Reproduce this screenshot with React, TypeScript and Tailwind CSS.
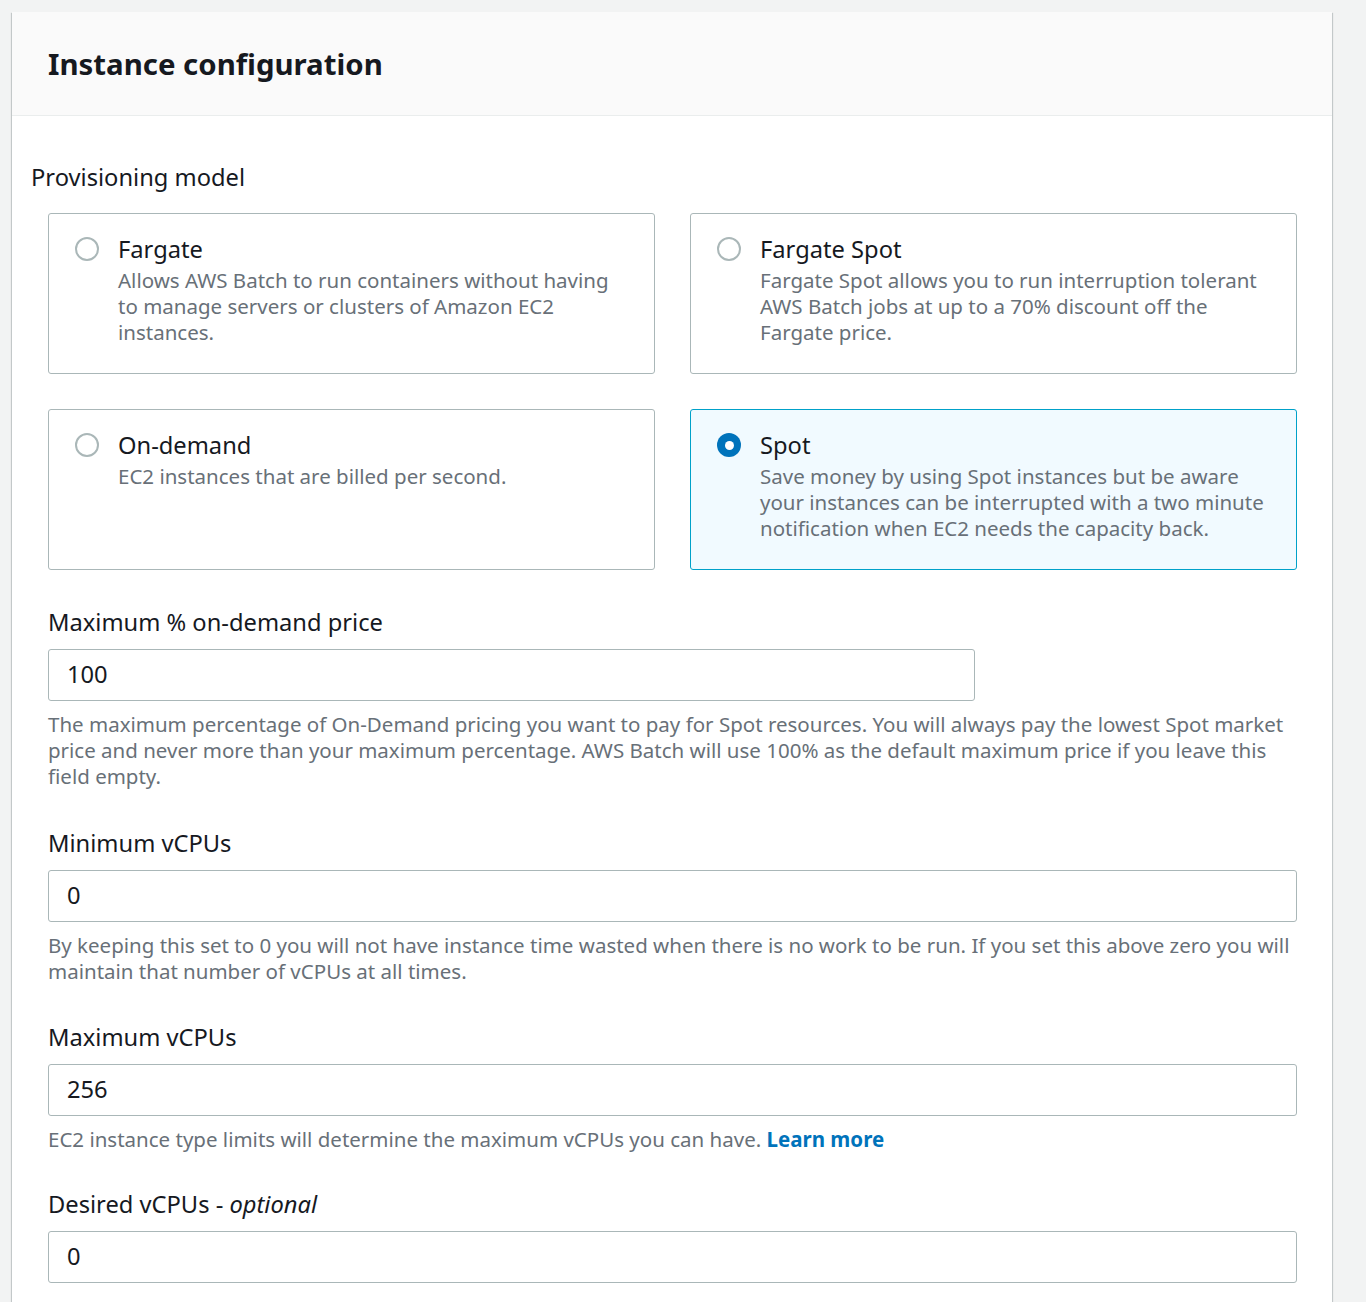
import React from "react";

type Tile = {
  title: string;
  lines: string[];
  selected?: boolean;
};

const tiles: Tile[] = [
  {
    title: "Fargate",
    lines: [
      "Allows AWS Batch to run containers without having",
      "to manage servers or clusters of Amazon EC2",
      "instances.",
    ],
  },
  {
    title: "Fargate Spot",
    lines: [
      "Fargate Spot allows you to run interruption tolerant",
      "AWS Batch jobs at up to a 70% discount off the",
      "Fargate price.",
    ],
  },
  {
    title: "On-demand",
    lines: ["EC2 instances that are billed per second."],
  },
  {
    title: "Spot",
    lines: [
      "Save money by using Spot instances but be aware",
      "your instances can be interrupted with a two minute",
      "notification when EC2 needs the capacity back.",
    ],
    selected: true,
  },
];

function Radio({ selected }: { selected?: boolean }) {
  return selected ? (
    <span className="mt-[3px] box-border flex h-[24px] w-[24px] shrink-0 items-center justify-center rounded-full bg-[#0073bb]">
      <span className="h-[9px] w-[9px] rounded-full bg-white" />
    </span>
  ) : (
    <span className="mt-[3px] box-border h-[24px] w-[24px] shrink-0 rounded-full border-2 border-[#aab7b8] bg-white" />
  );
}

function TileCard({ t }: { t: Tile }) {
  return (
    <div
      className={
        t.selected
          ? "box-border flex h-[161px] gap-[19px] rounded-[3px] border border-[#00a1c9] bg-[#f1faff] pl-[26px] pr-[20px] pt-[20px]"
          : "box-border flex h-[161px] gap-[19px] rounded-[3px] border border-[#aab7b8] bg-white pl-[26px] pr-[20px] pt-[20px]"
      }
    >
      <Radio selected={t.selected} />
      <div className="flex flex-col">
        <div className="text-[23.7px] leading-[30px] text-[#16191f]">{t.title}</div>
        <div className="mt-[3px] whitespace-nowrap text-[20.5px] leading-[26px] text-[#687078]">
          {t.lines.map((l, i) => (
            <div key={i}>{l}</div>
          ))}
        </div>
      </div>
    </div>
  );
}

function Field({
  label,
  value,
  narrow,
  children,
}: {
  label: React.ReactNode;
  value: string;
  narrow?: boolean;
  children?: React.ReactNode;
}) {
  return (
    <div className="flex flex-col">
      <div className="text-[23.7px] leading-[30px] text-[#16191f]">{label}</div>
      <div
        className={
          narrow
            ? "mt-[12px] box-border flex h-[52px] w-[927px] items-center rounded-[3px] border border-[#aab7b8] bg-white pl-[18px] text-[23.7px] text-[#16191f]"
            : "mt-[12px] box-border flex h-[52px] w-full items-center rounded-[3px] border border-[#aab7b8] bg-white pl-[18px] text-[23.7px] text-[#16191f]"
        }
      >
        {value}
      </div>
      {children ? (
        <div className="mt-[10px] whitespace-nowrap text-[20.5px] leading-[26px] text-[#687078]">{children}</div>
      ) : null}
    </div>
  );
}

export default function App() {
  return (
    <div className="min-h-[1302px] overflow-hidden bg-[#f2f3f3] pl-[12px] pt-[12px] font-['Noto_Sans',_'Open_Sans',_sans-serif]">
      <div className="w-[1320px] bg-white shadow-[0_1px_1px_0_rgba(0,28,36,0.3),1px_1px_1px_0_rgba(0,28,36,0.15),-1px_1px_1px_0_rgba(0,28,36,0.15)]">
        <div className="box-border flex h-[104px] items-center border-b border-[#eaeded] bg-[#fafafa] pl-[36px]">
          <h2 className="text-[29.4px] font-bold leading-[36px] text-[#16191f]">Instance configuration</h2>
        </div>
        <div className="flex flex-col pb-[60px] pl-[36px] pr-[35px] pt-[46px]">
          <div className="-ml-[17px] text-[23.7px] leading-[30px] text-[#16191f]">Provisioning model</div>
          <div className="mt-[21px] grid grid-cols-2 gap-x-[35px] gap-y-[35px]">
            {tiles.map((t) => (
              <TileCard key={t.title} t={t} />
            ))}
          </div>
          <div className="mt-[37px] flex flex-col">
            <Field label="Maximum % on-demand price" value="100" narrow>
              <div>
                The maximum percentage of On-Demand pricing you want to pay for Spot resources. You will always pay the lowest Spot market
              </div>
              <div>
                price and never more than your maximum percentage. AWS Batch will use 100% as the default maximum price if you leave this
              </div>
              <div>field empty.</div>
            </Field>
            <div className="mt-[39px]">
              <Field label="Minimum vCPUs" value="0">
                <div>
                  By keeping this set to 0 you will not have instance time wasted when there is no work to be run. If you set this above zero you will
                </div>
                <div>maintain that number of vCPUs at all times.</div>
              </Field>
            </div>
            <div className="mt-[38px]">
              <Field label="Maximum vCPUs" value="256">
                <div>
                  EC2 instance type limits will determine the maximum vCPUs you can have.{" "}
                  <a className="font-bold text-[#0073bb]" href="#">
                    Learn more
                  </a>
                </div>
              </Field>
            </div>
            <div className="mt-[37px]">
              <Field
                label={
                  <>
                    Desired vCPUs - <i>optional</i>
                  </>
                }
                value="0"
              />
            </div>
          </div>
        </div>
      </div>
    </div>
  );
}
